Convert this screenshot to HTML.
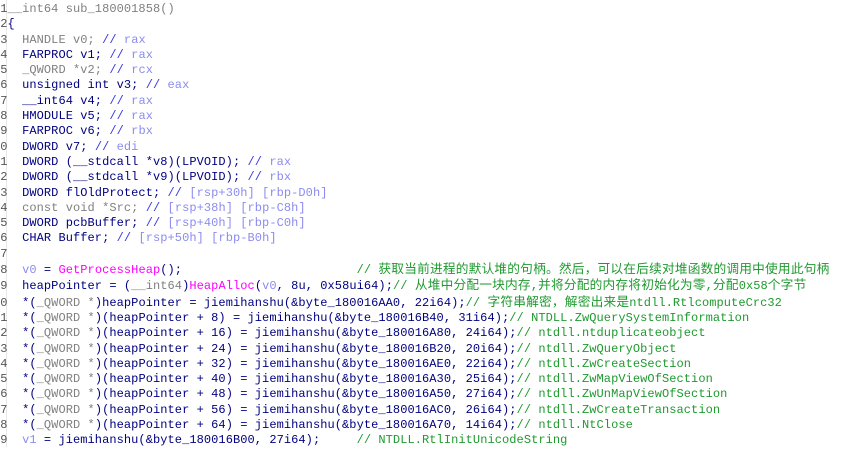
<!DOCTYPE html>
<html><head><meta charset="utf-8"><style>
html,body{margin:0;padding:0;background:#fff;width:866px;height:447px;overflow:hidden}
pre{position:absolute;left:-7px;top:2px;margin:0;font-family:"Liberation Mono","Noto Sans CJK SC",monospace;font-size:12px;letter-spacing:0.07px;line-height:15.3px;color:#000080;white-space:pre}
.n{color:#555}
.g{color:#808080}
.c{color:#3a3ae0}
.r{color:#8c8cf0}
.gr{color:#1f9a2f}
.p{color:#ff00ff}
.k{font-size:12.7px;letter-spacing:0.2px}
.sep{position:absolute;left:6px;top:0;width:1px;height:447px;background:#e8e8e8}
</style></head><body>
<div class="sep"></div>
<pre><span class="n"> 1</span><span class="g">__int64 sub_180001858()</span>
<span class="n"> 2</span>{
<span class="n"> 3</span>  <span class="g">HANDLE v0;</span> <span class="c">//</span> <span class="r">rax</span>
<span class="n"> 4</span>  FARPROC v1; <span class="c">//</span> <span class="r">rax</span>
<span class="n"> 5</span>  <span class="g">_QWORD *v2;</span> <span class="c">//</span> <span class="r">rcx</span>
<span class="n"> 6</span>  unsigned int v3; <span class="c">//</span> <span class="r">eax</span>
<span class="n"> 7</span>  __int64 v4; <span class="c">//</span> <span class="r">rax</span>
<span class="n"> 8</span>  HMODULE v5; <span class="c">//</span> <span class="r">rax</span>
<span class="n"> 9</span>  FARPROC v6; <span class="c">//</span> <span class="r">rbx</span>
<span class="n">10</span>  DWORD v7; <span class="c">//</span> <span class="r">edi</span>
<span class="n">11</span>  DWORD (__stdcall *v8)(LPVOID); <span class="c">//</span> <span class="r">rax</span>
<span class="n">12</span>  DWORD (__stdcall *v9)(LPVOID); <span class="c">//</span> <span class="r">rbx</span>
<span class="n">13</span>  DWORD flOldProtect; <span class="c">//</span> <span class="r">[rsp+30h] [rbp-D0h]</span>
<span class="n">14</span>  <span class="g">const void *Src;</span> <span class="c">//</span> <span class="r">[rsp+38h] [rbp-C8h]</span>
<span class="n">15</span>  DWORD pcbBuffer; <span class="c">//</span> <span class="r">[rsp+40h] [rbp-C0h]</span>
<span class="n">16</span>  CHAR Buffer; <span class="c">//</span> <span class="r">[rsp+50h] [rbp-B0h]</span>
<span class="n">17</span>
<span class="n">18</span>  <span class="r">v0</span> = <span class="p">GetProcessHeap</span>();                        <span class="gr">// <span class="k">获取当前进程的默认堆的句柄。然后，可以在后续对堆函数的调用中使用此句柄</span></span>
<span class="n">19</span>  heapPointer = (<span class="g">__int64</span>)<span class="p">HeapAlloc</span>(<span class="r">v0</span>, 8u, 0x58ui64);<span class="gr">// <span class="k">从堆中分配一块内存</span>,<span class="k">并将分配的内存将初始化为零</span>,<span class="k">分配</span>0x58<span class="k">个字节</span></span>
<span class="n">20</span>  *(<span class="g">_QWORD *</span>)heapPointer = jiemihanshu(&amp;byte_180016AA0, 22i64);<span class="gr">// <span class="k">字符串解密，解密出来是</span>ntdll.RtlcomputeCrc32</span>
<span class="n">21</span>  *(<span class="g">_QWORD *</span>)(heapPointer + 8) = jiemihanshu(&amp;byte_180016B40, 31i64);<span class="gr">// NTDLL.ZwQuerySystemInformation</span>
<span class="n">22</span>  *(<span class="g">_QWORD *</span>)(heapPointer + 16) = jiemihanshu(&amp;byte_180016A80, 24i64);<span class="gr">// ntdll.ntduplicateobject</span>
<span class="n">23</span>  *(<span class="g">_QWORD *</span>)(heapPointer + 24) = jiemihanshu(&amp;byte_180016B20, 20i64);<span class="gr">// ntdll.ZwQueryObject</span>
<span class="n">24</span>  *(<span class="g">_QWORD *</span>)(heapPointer + 32) = jiemihanshu(&amp;byte_180016AE0, 22i64);<span class="gr">// ntdll.ZwCreateSection</span>
<span class="n">25</span>  *(<span class="g">_QWORD *</span>)(heapPointer + 40) = jiemihanshu(&amp;byte_180016A30, 25i64);<span class="gr">// ntdll.ZwMapViewOfSection</span>
<span class="n">26</span>  *(<span class="g">_QWORD *</span>)(heapPointer + 48) = jiemihanshu(&amp;byte_180016A50, 27i64);<span class="gr">// ntdll.ZwUnMapViewOfSection</span>
<span class="n">27</span>  *(<span class="g">_QWORD *</span>)(heapPointer + 56) = jiemihanshu(&amp;byte_180016AC0, 26i64);<span class="gr">// ntdll.ZwCreateTransaction</span>
<span class="n">28</span>  *(<span class="g">_QWORD *</span>)(heapPointer + 64) = jiemihanshu(&amp;byte_180016A70, 14i64);<span class="gr">// ntdll.NtClose</span>
<span class="n">29</span>  <span class="r">v1</span> = jiemihanshu(&amp;byte_180016B00, 27i64);     <span class="gr">// NTDLL.RtlInitUnicodeString</span>
</pre>
</body></html>
